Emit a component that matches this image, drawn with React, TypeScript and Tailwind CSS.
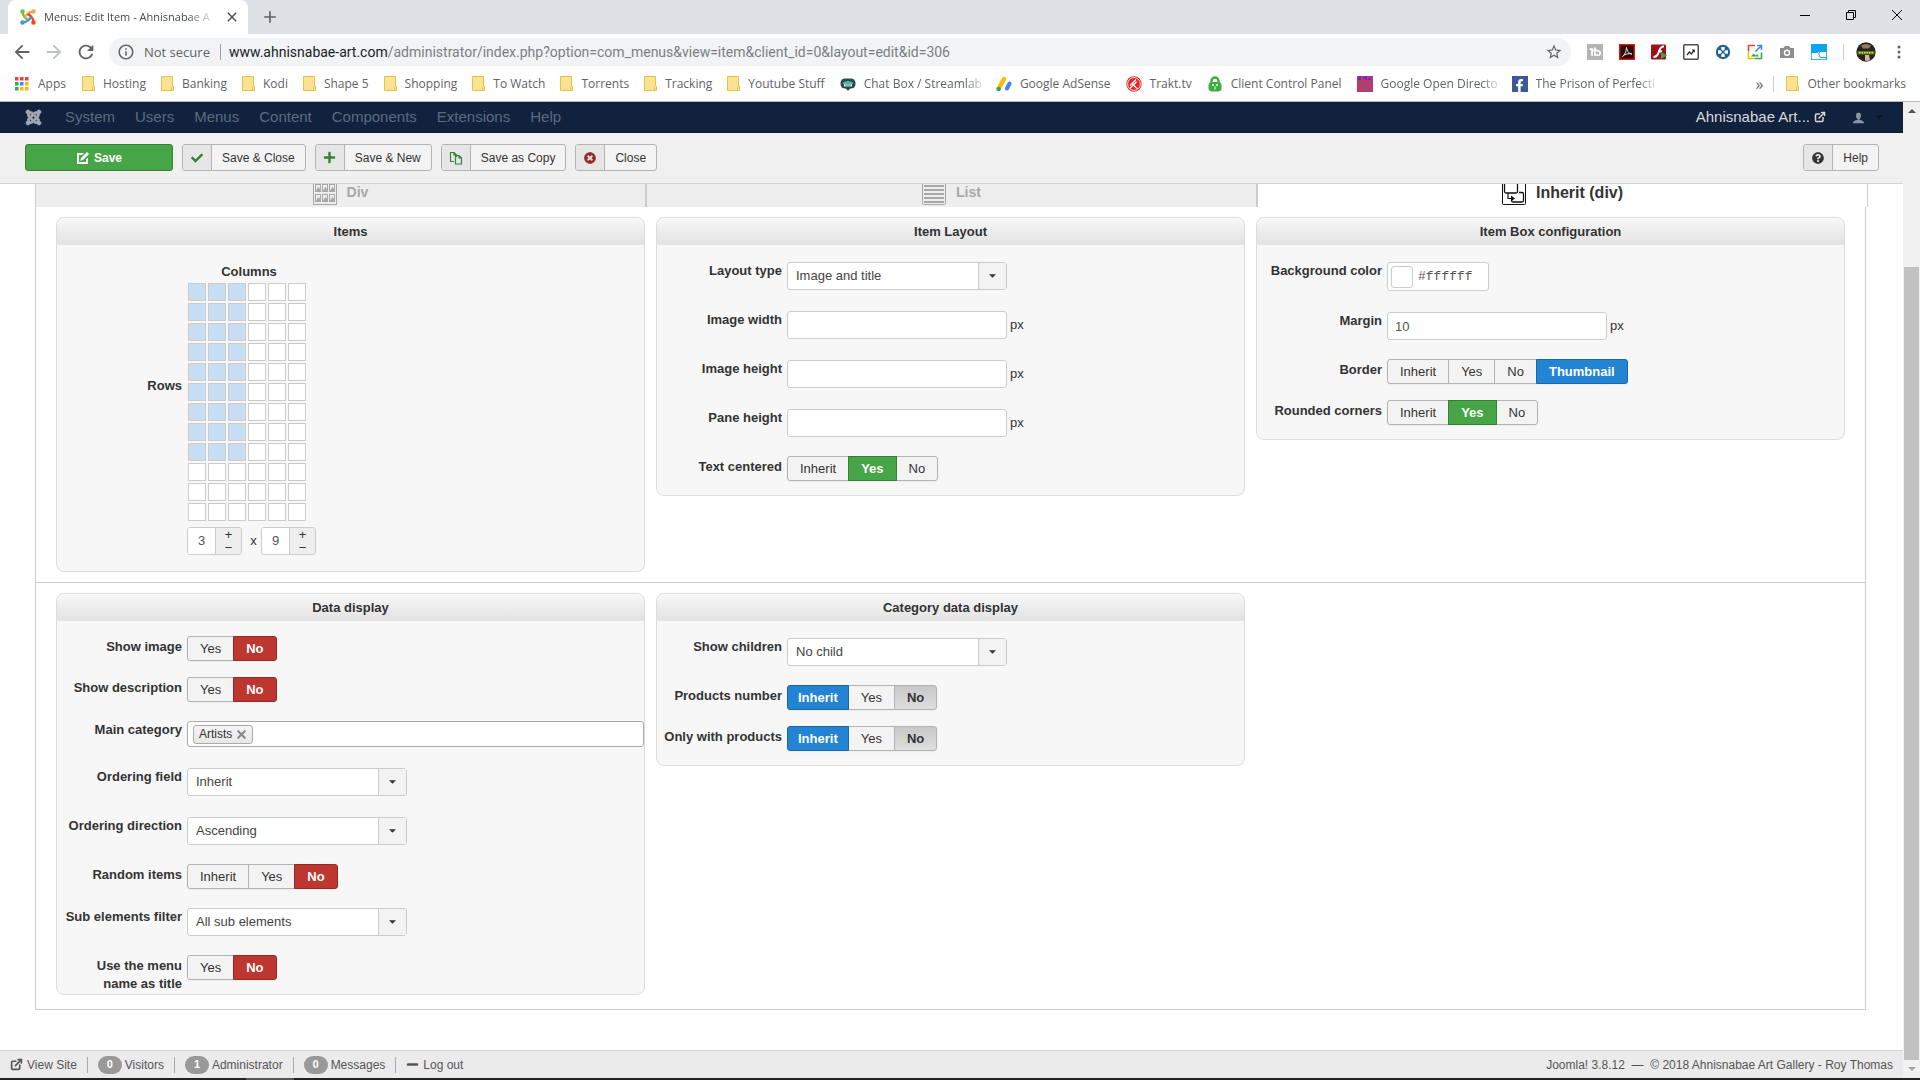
import React from "react";
import { FaJoomla, FaCheck, FaPlus, FaTimesCircle, FaQuestionCircle, FaMinus, FaFacebookF } from "react-icons/fa";
import { FiExternalLink } from "react-icons/fi";
import { ImUser } from "react-icons/im";
import { MdArrowBack, MdArrowForward, MdRefresh, MdInfoOutline, MdStarBorder, MdClose, MdAdd } from "react-icons/md";
import { X } from "lucide-react";

/* ---------- drawings ---------- */

function JoomlaColor() {
  const colors = ["#7ac143", "#f9a541", "#f44321", "#5091cd"];
  return (
    <svg viewBox="0 0 24 24" className="size-4 shrink-0" aria-hidden="true">
      {colors.map((c, i) => (
        <g key={c} transform={`rotate(${i * 90} 12 12)`}>
          <path d="M4.2 4.5 C3.6 9 5 10.2 7 12.2 L12 17" fill="none" stroke={c} strokeWidth="3.6" />
          <circle cx="3.8" cy="3.8" r="3.4" fill={c} />
        </g>
      ))}
    </svg>
  );
}

const Folder = () => (
  <svg viewBox="0 0 13 15" className="h-[15px] w-[13px] shrink-0" aria-hidden="true">
    <path d="M.5.5h11v9.5h1v4.5H.5z" fill="#fde293" stroke="#e8c04a" />
    <path d="M10.5 11v3.5" stroke="#e8c04a" />
  </svg>
);

const AppsIcon = () => (
  <svg viewBox="0 0 14 14" className="size-3.5 shrink-0" aria-hidden="true">
    {["#ea4335", "#ea4335", "#ea4335", "#34a853", "#4285f4", "#fbbc05", "#34a853", "#fbbc05", "#fbbc05"].map((c, i) => (
      <rect key={i} x={(i % 3) * 5} y={Math.floor(i / 3) * 5} width="3.5" height="3.5" fill={c} />
    ))}
  </svg>
);

const ChatIcon = () => (
  <svg viewBox="0 0 16 16" className="size-4 shrink-0" aria-hidden="true">
    <rect x="0.5" y="2.5" width="15" height="10" rx="4.5" fill="#31474c" />
    <path d="M5.500 12h5l-2.500 3z" fill="#31474c" />
    <path d="M3 6.500q5-3 10 0v1.500H3z" fill="#35c4a8" />
    <path d="M4 8h8v2.500H4z" fill="#e9f7f4" />
    <path d="M6 8v2.500M8 8v2.500M10 8v2.500" stroke="#31474c" strokeWidth="0.800" />
  </svg>
);

const AdSenseIcon = () => (
  <svg viewBox="0 0 16 16" className="size-4 shrink-0" aria-hidden="true">
    <path d="M8 3L3 12" stroke="#fbbc04" strokeWidth="4.4" strokeLinecap="round" />
    <path d="M13.5 7.500L11 12.500" stroke="#4285f4" strokeWidth="4" strokeLinecap="round" />
    <circle cx="2.600" cy="13" r="2.300" fill="#34a853" />
  </svg>
);

const TraktIcon = () => (
  <svg viewBox="0 0 16 16" className="size-4 shrink-0" aria-hidden="true">
    <circle cx="8" cy="8" r="7.700" fill="#ed2224" />
    <circle cx="8" cy="8" r="6.400" fill="none" stroke="#fff" strokeWidth="0.8" />
    <path d="M3.800 12.500L10.500 5.800M6 7.500L11.500 13M4 9.500L10 3.500" stroke="#fff" strokeWidth="1.300" fill="none" />
  </svg>
);

const LockIcon = () => (
  <svg viewBox="0 0 16 16" className="size-4 shrink-0" aria-hidden="true">
    <path d="M4.500 8V5a3.500 3.500 0 0 1 7 0v3" fill="none" stroke="#3dae3d" strokeWidth="2.400" />
    <rect x="1.500" y="6" width="13" height="9.500" rx="3.500" fill="#3dae3d" />
    <circle cx="6" cy="9" r="1" fill="#fff" />
    <circle cx="10" cy="9" r="1" fill="#fff" />
    <path d="M8 10.500v3" stroke="#fff" />
  </svg>
);

const OpenDirIcon = () => (
  <svg viewBox="0 0 16 16" className="size-4 shrink-0" aria-hidden="true">
    <rect width="16" height="16" fill="#b83a72" />
    <path d="M1 3h3M6 2h3M11 3h3M3 0v3M9 0v4" stroke="#6a1fd0" strokeWidth="1.500" />
    <path d="M3 7h2M10 7h2M5 12h6" stroke="#5a7a2a" strokeWidth="1.200" />
  </svg>
);

const FacebookIcon = () => (
  <span className="flex size-4 shrink-0 items-end justify-center bg-[#3b5998] text-white">
    <FaFacebookF size={13} />
  </span>
);

const ExtTb = () => (
  <svg viewBox="0 0 16 16" className="size-4" aria-hidden="true">
    <rect width="16" height="16" fill="#b4b4b4" />
    <path d="M2.500 5.200H5V12M8 3.500V12M6 6.300h4.500M8 11h3.200a2 2 0 0 0 0-4H9.500" fill="none" stroke="#fff" strokeWidth="1.700" />
  </svg>
);
const ExtPdf = () => (
  <svg viewBox="0 0 16 16" className="size-4" aria-hidden="true">
    <rect x="0.700" y="0.700" width="14.600" height="14.600" fill="#2a0a0a" stroke="#e3170a" strokeWidth="1.400" />
    <path d="M3.500 12.500C5.500 11 7.500 7.500 7.500 3.500 8 7 10 10 13 10 10 9 6 10 3.500 12.500z" fill="none" stroke="#f5d5d5" strokeWidth="1" />
  </svg>
);
const ExtFlash = () => (
  <svg viewBox="0 0 16 16" className="size-4" aria-hidden="true">
    <rect y="0.500" width="15" height="15" rx="1" fill="#9c1219" />
    <path d="M13 2.500C8.500 2 8.500 7 7 10 5.800 12.500 4.500 13 2.500 13M7 7.500h4" fill="none" stroke="#fff" strokeWidth="2" />
    <path d="M10 8l6 3.500-6 3.500z" fill="#27ae3b" />
  </svg>
);
const ExtChart = () => (
  <svg viewBox="0 0 16 16" className="size-4" aria-hidden="true">
    <rect x="0.750" y="0.750" width="14.500" height="14.500" rx="1" fill="#fff" stroke="#4a4d50" strokeWidth="1.500" />
    <path d="M4 11l2.500-3L8.500 10l2.500-4M9 6h2.200v2.200" fill="none" stroke="#222" strokeWidth="1.200" />
  </svg>
);
const ExtPad = () => (
  <svg viewBox="0 0 16 16" className="size-4" aria-hidden="true">
    <circle cx="8" cy="8" r="7.200" fill="#1d6590" />
    <path d="M6.300 6.300V3h3.400v3.300H13v3.400H9.700V13H6.300V9.700H3V6.300z" fill="#fff" />
    <path d="M6 6l4 4M10 6l-4 4" stroke="#1d6590" strokeWidth="1.200" />
  </svg>
);
const ExtImage = () => (
  <svg viewBox="0 0 16 16" className="size-4" aria-hidden="true">
    <path d="M8 1.500H1.500V7" fill="none" stroke="#ea4335" strokeWidth="1.600" />
    <path d="M1.500 7v7.500H8" fill="none" stroke="#fbbc05" strokeWidth="1.600" />
    <path d="M8 14.500h6.500V8.500" fill="none" stroke="#34a853" strokeWidth="1.600" />
    <path d="M8.500 7.500l5.500-5.500M10 1.500h4.500V6" fill="none" stroke="#4285f4" strokeWidth="1.600" />
    <path d="M4 12.500l2.500-3 2 2 1.500-1.500 2 2.500z" fill="#34a853" />
  </svg>
);
const ExtCamera = () => (
  <svg viewBox="0 0 16 16" className="size-4" aria-hidden="true">
    <path d="M1 4h3.500l1.500-2h4l1.500 2H15v10H1z" fill="#8d8d8d" />
    <circle cx="8" cy="8.800" r="3.200" fill="#fff" />
    <circle cx="8" cy="8.800" r="1.800" fill="#8d8d8d" />
  </svg>
);
const ExtBlue = () => (
  <svg viewBox="0 0 16 16" className="size-4" aria-hidden="true">
    <rect x="0.400" y="0.400" width="15.200" height="15.200" fill="#fff" stroke="#09a6f3" strokeWidth="0.800" />
    <path d="M0 0h16v8H0z" fill="#09a6f3" />
    <path d="M0 8.500h6.500q1 0 1.300 1.300l.6 2.200q.4 1.500 1.600 1.500h6M8 9l1-.5" fill="none" stroke="#09a6f3" />
  </svg>
);
const Avatar = () => (
  <svg viewBox="0 0 20 20" className="size-5" aria-hidden="true">
    <circle cx="10" cy="10" r="9.700" fill="#2b241c" />
    <path d="M5 3.500q5-3 10 0l-2 3H7z" fill="#8a7a66" />
    <path d="M1.500 9h17v3.500h-17z" fill="#5d7a1c" />
    <path d="M3 10.700h14" stroke="#c3dc47" strokeWidth="1.500" strokeDasharray="1.500 1" />
    <path d="M9 13h4l1 5q-3 1.500-5 .5z" fill="#c9b8a5" />
  </svg>
);

const EditIcon = () => (
  <svg viewBox="0 0 14 14" className="size-3.5" aria-hidden="true">
    <path d="M1 2h7L6 4H3v7h7V8.500l2-2V13H1z" fill="currentColor" />
    <path d="M11 1l2 2-6 6-2.800.8L5 7z" fill="currentColor" />
  </svg>
);
const CopyIcon = () => (
  <svg viewBox="0 0 14 14" className="size-3.5 text-[#378137]" fill="none" stroke="currentColor" strokeWidth="1.200" aria-hidden="true">
    <path d="M5 10.500H1.500v-9H5L7.500 4v2M5 1.500V4h2.500" />
    <path d="M7 4.500h3L12.500 7v6H6.500V4.500zM10 4.500V7h2.500" />
  </svg>
);
const DivIcon = () => (
  <svg viewBox="0 0 24 24" className="size-6" fill="none" stroke="#a8a8a8" aria-hidden="true">
    <rect x="0.500" y="0.500" width="23" height="23" />
    {[0, 1, 2, 3, 4, 5].map((i) => {
      const x = 2.5 + (i % 3) * 7;
      const y = 3.5 + Math.floor(i / 3) * 10;
      return (
        <g key={i}>
          <rect x={x} y={y} width="5" height="7" />
          <path d={`M${x + 1} ${y + 6}l2-3 2 3z`} fill="#a8a8a8" />
        </g>
      );
    })}
  </svg>
);
const ListIcon = () => (
  <svg viewBox="0 0 24 24" className="size-6" fill="none" stroke="#a8a8a8" aria-hidden="true">
    <rect x="0.500" y="0.500" width="23" height="23" rx="1" />
    <path d="M2 5h20M2 9h20M2 13h20M2 17h20M2 21h20" strokeWidth="2" />
  </svg>
);
const InheritIcon = () => (
  <svg viewBox="0 0 24 24" className="size-6" fill="none" stroke="#111" aria-hidden="true">
    <rect x="0.500" y="0.500" width="23" height="23" rx="1" />
    <path d="M2.500 2v8.500q0 1.500 1.500 1.500h10q1.500 0 1.500-1.500V2" strokeWidth="1.300" />
    <path d="M17 11.500h3q1.500 0 1.500 1.500v6.500q0 1.500-1.500 1.500h-9q-1.500 0-1.500-1.500V19" strokeWidth="1.300" />
    <path d="M6 12v5.500h5" strokeWidth="1.200" />
    <path d="M9 14.500l4 3-4 3z" fill="#111" stroke="none" />
  </svg>
);

const Caret = ({ className }: { className: string }) => (
  <svg viewBox="0 0 8 4" className={className} aria-hidden="true">
    <path d="M0 0h8L4 4z" fill="currentColor" />
  </svg>
);

/* ---------- browser chrome ---------- */

const bookmarks: { label: string; icon: React.ReactNode; long?: boolean }[] = [
  { label: "Hosting", icon: <Folder /> },
  { label: "Banking", icon: <Folder /> },
  { label: "Kodi", icon: <Folder /> },
  { label: "Shape 5", icon: <Folder /> },
  { label: "Shopping", icon: <Folder /> },
  { label: "To Watch", icon: <Folder /> },
  { label: "Torrents", icon: <Folder /> },
  { label: "Tracking", icon: <Folder /> },
  { label: "Youtube Stuff", icon: <Folder /> },
  { label: "Chat Box / Streamlab", icon: <ChatIcon />, long: true },
  { label: "Google AdSense", icon: <AdSenseIcon /> },
  { label: "Trakt.tv", icon: <TraktIcon /> },
  { label: "Client Control Panel", icon: <LockIcon /> },
  { label: "Google Open Directo", icon: <OpenDirIcon />, long: true },
  { label: "The Prison of Perfecti", icon: <FacebookIcon />, long: true },
];

const fade = "[mask-image:linear-gradient(to_right,black_86%,#0003)]";

function Chrome() {
  return (
    <header className="shrink-0 font-['Open_Sans','Noto_Sans',sans-serif] text-xs text-[#5f6368]">
      <div className="flex h-[34px] bg-[#dee1e6] pl-2">
        <div className="flex w-60 items-center rounded-t-lg bg-white pl-3 pr-2 text-[#45494d]">
          <JoomlaColor />
          <span className={`ml-2 whitespace-nowrap text-[11px] ${fade}`}>Menus: Edit Item - Ahnisnabae A</span>
          <button aria-label="Close tab" className="ml-auto"><MdClose size={16} /></button>
        </div>
        <button aria-label="New tab" className="ml-3"><MdAdd size={20} /></button>
        <div className="ml-auto flex items-center gap-9 pb-1 pr-[18px] text-black">
          <button aria-label="Minimize"><svg className="size-2.5" viewBox="0 0 10 10"><path d="M0 5.500h10" stroke="currentColor" /></svg></button>
          <button aria-label="Restore"><svg className="size-2.5" viewBox="0 0 10 10" fill="none" stroke="currentColor"><path d="M.5 2.500h7v7h-7zM2.500 2.500v-2h7v7h-2" /></svg></button>
          <button aria-label="Close"><svg className="size-2.5" viewBox="0 0 10 10"><path d="M0 0l10 10M10 0L0 10" stroke="currentColor" /></svg></button>
        </div>
      </div>
      <div className="flex h-9 items-center bg-white pl-[11px] pr-[19px]">
        <button aria-label="Back"><MdArrowBack size={22} /></button>
        <button aria-label="Forward" className="ml-2.5 text-[#bdc1c6]"><MdArrowForward size={22} /></button>
        <button aria-label="Reload" className="ml-2.5"><MdRefresh size={22} /></button>
        <div className="ml-3 flex h-7 flex-1 items-center rounded-full bg-[#f1f3f4] px-2">
          <MdInfoOutline size={18} />
          <span className="ml-[9px] border-r border-[#9aa0a6] pr-2.5 text-[13px] leading-4">Not secure</span>
          <span className="ml-2 flex-1 font-[Roboto,sans-serif] text-sm text-[#7b7f84]"><span className="text-[#202124]">www.ahnisnabae-art.com</span>/administrator/index.php?option=com_menus&amp;view=item&amp;client_id=0&amp;layout=edit&amp;id=306</span>
          <MdStarBorder size={18} />
        </div>
        <div className="ml-4 flex items-center gap-4">
          <ExtTb /><ExtPdf /><ExtFlash /><ExtChart /><ExtPad /><ExtImage /><ExtCamera /><ExtBlue />
        </div>
        <span className="ml-4 h-4 w-px bg-[#c8cbce]" />
        <button aria-label="Profile" className="ml-3"><Avatar /></button>
        <button aria-label="Browser menu" className="ml-[21px]">
          <svg viewBox="0 0 4 16" className="h-4 w-1" fill="#5f6368"><circle cx="2" cy="3" r="1.500" /><circle cx="2" cy="8" r="1.500" /><circle cx="2" cy="13" r="1.500" /></svg>
        </button>
      </div>
      <nav className="flex h-8 items-center whitespace-nowrap border-b border-[#b5b7ba] bg-white pb-1 pl-[15px] pr-3.5">
        <a href="#" className="mr-4 flex items-center gap-[9px]"><AppsIcon />Apps</a>
        {bookmarks.map((b) => (
          <a href="#" key={b.label} className="mr-3.5 flex items-center gap-2">
            {b.icon}
            <span className={b.long ? fade : "mr-px"}>{b.label}</span>
          </a>
        ))}
        <span className="ml-auto text-base leading-4">»</span>
        <a href="#" className="ml-2.5 flex items-center gap-2 border-l border-[#c8cbce] pl-3"><Folder />Other bookmarks</a>
      </nav>
    </header>
  );
}

/* ---------- form pieces ---------- */

type Tone = "green" | "red" | "blue" | "gray";
const tones: Record<Tone, string> = {
  green: "z-10 border-[#378137] bg-[#46a546] font-bold text-white",
  red: "z-10 border-[#942a25] bg-[#bd362f] font-bold text-white",
  blue: "z-10 border-[#1a67a8] bg-[#2384d3] font-bold text-white",
  gray: "border-[#b3b3b3] bg-linear-to-b from-[#c8c8c8] to-[#dedede] font-bold",
};

function Row({ label, id, radio, spacing, children }: { label: string; id?: string; radio?: boolean; spacing?: string; children: React.ReactNode }) {
  const lab = "w-[125px] shrink-0 pl-1 text-right font-bold leading-[18px]";
  return (
    <div className={`flex items-start gap-[5px] ${spacing ?? (radio ? "pb-4" : "pt-0.5 pb-[19px]")}`} role={radio ? "radiogroup" : undefined} aria-label={radio ? label : undefined}>
      {radio ? <span className={`${lab} pt-0.5`}>{label}</span> : <label htmlFor={id} className={lab}>{label}</label>}
      {children}
    </div>
  );
}

function Radios({ label, options, on, spacing }: { label: string; options: string[]; on: Record<string, Tone>; spacing?: string }) {
  const chosen = Object.keys(on)[0];
  return (
    <Row label={label} radio spacing={spacing}>
      <div className="flex rounded-[3px] shadow-[0_1px_2px_rgba(0,0,0,0.05)]">
        {options.map((o) => (
          <label
            key={o}
            className={`relative -ml-px h-[25px] cursor-pointer whitespace-nowrap border leading-[23px] first:ml-0 first:rounded-l-[3px] last:rounded-r-[3px] ${on[o] ? tones[on[o]] : "border-[#b3b3b3] bg-[#f3f3f3]"} ${on[o] && o === "Inherit" ? "px-2.5" : "px-3"}`}
          >
            <input type="radio" name={label} defaultChecked={o === chosen} className="sr-only" />
            {o}
          </label>
        ))}
      </div>
    </Row>
  );
}

function Select({ label, id, value, spacing }: { label: string; id: string; value: string; spacing?: string }) {
  return (
    <Row label={label} id={id} spacing={spacing}>
      <div className="relative w-[220px]">
        <select id={id} className="block h-7 w-full appearance-none rounded-[3px] border border-[#ccc] bg-white pl-2 pr-8 text-[#444]">
          <option>{value}</option>
        </select>
        <span className="pointer-events-none absolute inset-y-px right-px flex w-7 items-center justify-center border-l border-[#ccc] bg-[#f3f3f3]">
          <Caret className="h-1 w-[7px]" />
        </span>
      </div>
    </Row>
  );
}

function TextField({ label, id, value = "" }: { label: string; id: string; value?: string }) {
  return (
    <Row label={label} id={id}>
      <div className="flex items-center gap-[3px]">
        <input id={id} defaultValue={value} className="h-7 w-[220px] rounded-[3px] border border-[#ccc] bg-white px-[7px] text-[#555]" />
        <span>px</span>
      </div>
    </Row>
  );
}

function Panel({ title, children }: { title: string; children: React.ReactNode }) {
  return (
    <section className="rounded-lg border border-[#ddd] bg-[#f7f7f7]">
      <h2 className="h-[27px] rounded-t-lg bg-linear-to-b from-[#f8f8f8] to-[#e2e2e2] text-center font-bold leading-[27px]">{title}</h2>
      <div className="pt-[15px]">{children}</div>
    </section>
  );
}

function Spinner({ value, label }: { value: string; label: string }) {
  return (
    <div className="flex h-7 w-[55px] overflow-hidden rounded-[3px] border border-[#ccc]">
      <input aria-label={label} defaultValue={value} className="w-[27px] bg-white text-center text-[#555]" />
      <div className="flex flex-1 flex-col border-l border-[#ccc] bg-[#eee] leading-[13px]">
        <button aria-label={`More ${label}`}>+</button>
        <button aria-label={`Fewer ${label}`}>−</button>
      </div>
    </div>
  );
}

function ItemsPanel() {
  return (
    <Panel title="Items">
      <div className="flex items-center gap-1.5 pt-[3px]">
        <span className="w-[125px] pb-3 text-right font-bold">Rows</span>
        <div>
          <p className="w-[122px] text-center font-bold leading-[18px]">Columns</p>
          <div className="mt-0.5 grid grid-cols-[repeat(6,18px)] gap-0.5">
            {Array.from({ length: 72 }, (_, i) => (
              <button
                key={i}
                aria-label={`${(i % 6) + 1} by ${Math.floor(i / 6) + 1}`}
                className={i % 6 < 3 && i < 54 ? "h-[18px] border border-[#ccc] bg-[#c8def4]" : "h-[18px] border border-[#ccc] bg-white"}
              />
            ))}
          </div>
        </div>
      </div>
      <div className="mt-1.5 flex items-center pb-4 pl-[130px]">
        <Spinner value="3" label="columns" />
        <span className="w-[19px] pl-1 text-center">x</span>
        <Spinner value="9" label="rows" />
      </div>
    </Panel>
  );
}

/* ---------- admin page ---------- */

function ToolButton({ icon, children }: { icon: React.ReactNode; children: string }) {
  return (
    <button className="flex h-[27px] items-stretch overflow-hidden rounded-[3px] border border-[#b3b3b3] bg-[#f3f3f3] text-xs">
      <span className="flex w-[29px] items-center justify-center border-r border-[#b3b3b3] bg-[#e6e6e6]">{icon}</span>
      <span className="self-center px-2.5">{children}</span>
    </button>
  );
}

const Badge = ({ children }: { children: string }) => (
  <span className="mr-[3px] flex h-[18px] w-6 items-center justify-center rounded-full bg-[#999] text-[11px] font-bold text-white">{children}</span>
);

const idleTab = "flex h-[23px] flex-1 items-end justify-center gap-2.5 border-r-2 border-[#ccc] bg-[#eee] pb-0.5 text-sm text-[#a8a8a8]";

function AdminPage() {
  return (
    <div className="flex min-w-0 flex-1 flex-col">
      <nav className="flex h-[31px] shrink-0 items-center border-b border-[#0d1a30] bg-[#10223e] pl-[25px] pr-5 text-[15px] text-[#5d6a7e]">
        <FaJoomla size={17} stroke="currentColor" strokeWidth={28} className="mr-[23px] overflow-visible text-[#a2a9b4]" aria-label="Joomla" />
        <div className="flex gap-5">
          {["System", "Users", "Menus", "Content", "Components", "Extensions", "Help"].map((m) => (
            <a href="#" key={m}>{m}</a>
          ))}
        </div>
        <a href="#" className="ml-auto flex items-center gap-1 text-[#d9d9d9]">Ahnisnabae Art... <FiExternalLink size={12} strokeWidth={3} /></a>
        <button aria-label="User menu" className="ml-[26px] flex items-center gap-2.5 text-[#8c95a3]">
          <ImUser size={13} />
          <Caret className="h-1 w-2 text-[#0a1528]" />
        </button>
      </nav>

      <div className="flex h-[51px] shrink-0 items-start gap-[9px] border-b border-[#d4d4d4] bg-[#f0f0f0] pt-[11px] pl-[25px] pr-6">
        <button className="flex h-[27px] w-[148px] items-center justify-center gap-1 rounded-[3px] border border-[#378137] bg-[#46a546] text-xs font-bold text-white">
          <EditIcon />Save
        </button>
        <ToolButton icon={<FaCheck size={12} color="#378137" />}>Save &amp; Close</ToolButton>
        <ToolButton icon={<FaPlus size={13} color="#378137" />}>Save &amp; New</ToolButton>
        <ToolButton icon={<CopyIcon />}>Save as Copy</ToolButton>
        <ToolButton icon={<FaTimesCircle size={12} color="#942a25" />}>Close</ToolButton>
        <div className="ml-auto"><ToolButton icon={<FaQuestionCircle size={12} />}>Help</ToolButton></div>
      </div>

      <main className="flex-1 bg-white pl-[35px] pr-[37px]">
        <div className="-mr-0.5 flex h-[23px] overflow-hidden border-x border-[#ccc] text-base font-bold leading-[18px]">
          <button className={idleTab}><DivIcon /><span className="pb-[3px]">Div</span></button>
          <button className={idleTab}><ListIcon /><span className="pb-[3px]">List</span></button>
          <button className="flex h-[23px] flex-1 items-end justify-center gap-2.5 bg-white pb-0.5"><InheritIcon /><span className="pb-[3px]">Inherit (div)</span></button>
        </div>
        <div className="border-x border-b border-[#ccc]">
          <div className="grid grid-cols-3 items-start gap-[11px] border-b border-[#ccc] px-5 py-2.5">
            <ItemsPanel />
            <Panel title="Item Layout">
              <Select label="Layout type" id="layout-type" value="Image and title" />
              <TextField label="Image width" id="image-width" />
              <TextField label="Image height" id="image-height" />
              <TextField label="Pane height" id="pane-height" />
              <Radios label="Text centered" options={["Inherit", "Yes", "No"]} on={{ Yes: "green" }} spacing="pb-3.5" />
            </Panel>
            <Panel title="Item Box configuration">
              <Row label="Background color" id="bg-color">
                <div className="flex h-[29px] w-[102px] items-center rounded-[3px] border border-[#ccc] bg-white pl-[3px]">
                  <button aria-label="Pick color" className="h-[22px] w-[22px] shrink-0 rounded-[3px] border border-[#ccc] bg-white" />
                  <input id="bg-color" defaultValue="#ffffff" className="ml-[5px] w-full min-w-0 font-['Liberation_Mono',monospace] text-[13px] text-[#555]" />
                </div>
              </Row>
              <TextField label="Margin" id="margin" value="10" />
              <Radios label="Border" options={["Inherit", "Yes", "No", "Thumbnail"]} on={{ Thumbnail: "blue" }} />
              <Radios label="Rounded corners" options={["Inherit", "Yes", "No"]} on={{ Yes: "green" }} spacing="pb-3.5" />
            </Panel>
          </div>
          <div className="grid grid-cols-3 items-start gap-[11px] px-5 pt-2.5 pb-3.5">
            <Panel title="Data display">
              <Radios label="Show image" options={["Yes", "No"]} on={{ No: "red" }} />
              <Radios label="Show description" options={["Yes", "No"]} on={{ No: "red" }} />
              <Row label="Main category" id="main-category" spacing="pt-[3px] pb-[19px]">
                <div className="flex h-[26px] flex-1 items-center rounded-[3px] border border-[#aaa] bg-white pl-[5px]">
                  <span className="flex h-[19px] items-center gap-[3px] rounded-[3px] border border-[#aaa] bg-linear-to-b from-[#f4f4f4] to-[#e8e8e8] pl-[5px] pr-1 text-xs">
                    Artists
                    <button aria-label="Remove Artists" className="text-[#888]"><X size={13} strokeWidth={4} /></button>
                  </span>
                  <input id="main-category" className="min-w-0 flex-1 bg-transparent outline-none" />
                </div>
              </Row>
              <Select label="Ordering field" id="ordering-field" value="Inherit" />
              <Select label="Ordering direction" id="ordering-direction" value="Ascending" />
              <Radios label="Random items" options={["Inherit", "Yes", "No"]} on={{ No: "red" }} />
              <Select label="Sub elements filter" id="sub-elements" value="All sub elements" spacing="pt-[3px] pb-[19px]" />
              <Radios label="Use the menu name as title" options={["Yes", "No"]} on={{ No: "red" }} spacing="pb-px" />
            </Panel>
            <Panel title="Category data display">
              <Select label="Show children" id="show-children" value="No child" />
              <Radios label="Products number" options={["Inherit", "Yes", "No"]} on={{ Inherit: "blue", No: "gray" }} />
              <Radios label="Only with products" options={["Inherit", "Yes", "No"]} on={{ Inherit: "blue", No: "gray" }} spacing="pb-3.5" />
            </Panel>
          </div>
        </div>
      </main>

      <footer className="flex h-7 shrink-0 items-center border-t border-[#d4d4d4] bg-[#ebebeb] pl-2.5 pr-2.5 text-xs text-[#555]">
        <a href="#" className="flex items-center gap-1 border-r border-[#aaa] pr-2.5 leading-4"><FiExternalLink size={13} strokeWidth={3} />View Site</a>
        <span className="flex h-4 items-center border-r border-[#aaa] px-2.5"><Badge>0</Badge>Visitors</span>
        <span className="flex h-4 items-center border-r border-[#aaa] px-2.5"><Badge>1</Badge>Administrator</span>
        <span className="flex h-4 items-center border-r border-[#aaa] px-2.5"><Badge>0</Badge>Messages</span>
        <a href="#" className="flex items-center gap-1 pl-2.5"><FaMinus size={13} />Log out</a>
        <p className="ml-auto whitespace-pre">{"Joomla! 3.8.12  —  © 2018 Ahnisnabae Art Gallery - Roy Thomas"}</p>
      </footer>
    </div>
  );
}

export default function App() {
  return (
    <div className="flex h-screen flex-col overflow-hidden bg-white font-['Liberation_Sans',Arial,sans-serif] text-[13px] leading-[18px] text-[#333]">
      <Chrome />
      <div className="flex min-h-0 flex-1">
        <AdminPage />
        <div className="flex w-[17px] shrink-0 flex-col items-center bg-[#f1f1f1] text-[#505050]" aria-hidden="true">
          <Caret className="my-[7px] h-1 w-2 rotate-180" />
          <div className="mt-[147px] w-[15px] flex-1 bg-[#c1c1c1]" />
          <Caret className="my-[7px] h-1 w-2 text-[#a3a3a3]" />
        </div>
      </div>
      <div className="h-0.5 shrink-0 bg-[#222] pl-[246px]"><div className="h-full w-12 bg-[#555]" /></div>
    </div>
  );
}
